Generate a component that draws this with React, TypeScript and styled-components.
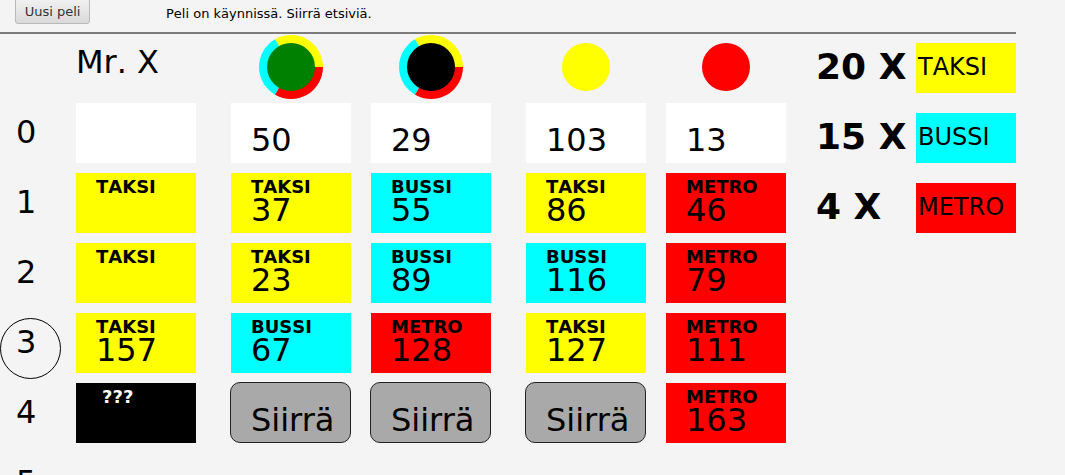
import React from "react";
import styled, { createGlobalStyle } from "styled-components";

const GlobalStyle = createGlobalStyle`
  *, *::before, *::after { box-sizing: border-box; }
  body {
    margin: 0;
    background: #f4f4f4;
    color: #000;
    font-family: "DejaVu Sans", sans-serif;
    font-kerning: none;
  }
`;

type Ticket = "TAKSI" | "BUSSI" | "METRO" | "???";

const ticketColors: Record<Ticket, string> = {
  TAKSI: "#ffff00",
  BUSSI: "#00ffff",
  METRO: "#ff0000",
  "???": "#000000",
};

const Page = styled.div`
  height: 100vh;
  overflow: hidden;
  padding-right: 49px;
`;

const Toolbar = styled.header`
  display: flex;
  align-items: flex-start;
  height: 34px;
  padding-left: 15px;
  border-bottom: 2px solid #7c7c7c;
`;

const NewGameButton = styled.button`
  width: 75px;
  height: 26px;
  margin: -2px 0 0;
  padding: 0;
  border: 1px solid #b9b9b9;
  border-radius: 3px;
  background: linear-gradient(#f2f2f2, #d9d9d9);
  color: #333;
  font: 13px/26px "DejaVu Sans", sans-serif;
`;

const Status = styled.p`
  margin: 0 0 0 76px;
  font-size: 13px;
  line-height: 27px;
`;

const Game = styled.main`
  display: flex;
  align-items: flex-start;
`;

const Board = styled.table`
  flex: 1;
  width: 100%;
  table-layout: fixed;
  border-collapse: collapse;
`;

const Column = styled.col<{ $width: number }>`
  width: ${(p) => p.$width}px;
`;

const HeadCell = styled.th<{ $gap: number }>`
  height: 69px;
  padding: 0 ${(p) => p.$gap}px 0 0;
  font-size: 32px;
  font-weight: 400;
  line-height: 56px;
  text-align: left;
  vertical-align: top;
`;

const Token = styled.svg`
  display: block;
  width: 64px;
  height: 64px;
  margin: 1px auto 0;
`;

const RoundCell = styled.th`
  position: relative;
  height: 70px;
  padding: 0 0 0 16px;
  font-size: 32px;
  font-weight: 400;
  line-height: 58px;
  text-align: left;
  vertical-align: top;
`;

const CurrentRing = styled.span`
  position: absolute;
  top: 5px;
  left: 0;
  width: 61px;
  height: 61px;
  border: 1px solid #000;
  border-radius: 50%;
`;

const MoveCell = styled.td<{ $gap: number }>`
  height: 70px;
  padding: 0 ${(p) => p.$gap}px 0 0;
  vertical-align: top;
`;

const MoveCard = styled.div<{ $ticket?: Ticket }>`
  display: flex;
  flex-direction: column;
  height: 60px;
  padding: 3px 0 10px 20px;
  background: ${(p) => (p.$ticket ? ticketColors[p.$ticket] : "#fff")};
`;

const TicketName = styled.span<{ $hidden: boolean }>`
  padding-left: ${(p) => (p.$hidden ? 6 : 0)}px;
  color: ${(p) => (p.$hidden ? "#fff" : "#000")};
  font-size: 18px;
  font-weight: 700;
  line-height: 21px;
`;

const Station = styled.span`
  margin-top: auto;
  font-size: 32px;
  line-height: 26px;
`;

const MoveButton = styled.button`
  display: flex;
  align-items: flex-end;
  width: calc(100% + 1px);
  height: 61px;
  margin: -1px 0 0 -1px;
  padding: 0 0 9px 20px;
  border: 1px solid #222;
  border-radius: 10px;
  background: #a9a9a9;
  color: #000;
  font: 32px/26px "DejaVu Sans", sans-serif;
`;

const Stock = styled.ul`
  display: flex;
  flex-direction: column;
  gap: 20px;
  width: 200px;
  margin: 9px 0 0 30px;
  padding: 0;
  list-style: none;
`;

const StockRow = styled.li`
  display: flex;
  justify-content: space-between;
  height: 50px;
`;

const StockCount = styled.span`
  font-size: 36px;
  font-weight: 700;
  line-height: 48px;
  white-space: nowrap;
`;

const StockTicket = styled.span<{ $ticket: Ticket }>`
  width: 100px;
  padding-left: 2px;
  background: ${(p) => ticketColors[p.$ticket]};
  font-size: 24px;
  line-height: 48px;
`;

interface Player {
  name: string;
  color: string;
  ring?: boolean;
}

const players: Player[] = [
  { name: "Vihreä", color: "#008000", ring: true },
  { name: "Musta", color: "#000000", ring: true },
  { name: "Keltainen", color: "#ffff00" },
  { name: "Punainen", color: "#ff0000" },
];

type Move = { ticket?: Ticket; station?: number } | "move" | null;

const rounds: Move[][] = [
  [{}, { station: 50 }, { station: 29 }, { station: 103 }, { station: 13 }],
  [
    { ticket: "TAKSI" },
    { ticket: "TAKSI", station: 37 },
    { ticket: "BUSSI", station: 55 },
    { ticket: "TAKSI", station: 86 },
    { ticket: "METRO", station: 46 },
  ],
  [
    { ticket: "TAKSI" },
    { ticket: "TAKSI", station: 23 },
    { ticket: "BUSSI", station: 89 },
    { ticket: "BUSSI", station: 116 },
    { ticket: "METRO", station: 79 },
  ],
  [
    { ticket: "TAKSI", station: 157 },
    { ticket: "BUSSI", station: 67 },
    { ticket: "METRO", station: 128 },
    { ticket: "TAKSI", station: 127 },
    { ticket: "METRO", station: 111 },
  ],
  [{ ticket: "???" }, "move", "move", "move", { ticket: "METRO", station: 163 }],
  [null, null, null, null, null],
];

const stock: { count: number; ticket: Ticket }[] = [
  { count: 20, ticket: "TAKSI" },
  { count: 15, ticket: "BUSSI" },
  { count: 4, ticket: "METRO" },
];

const revealRound = 3;
const columnWidths = [76, 155, 140, 155, 140, 120];
const columnGaps = [35, 20, 35, 20, 0];

function PlayerToken({ player }: { player: Player }) {
  return (
    <Token viewBox="0 0 64 64" role="img" aria-label={player.name}>
      {player.ring && (
        <>
          <path d="M32 32 L64 32 A32 32 0 0 0 16 4.29 Z" fill="#ffff00" />
          <path d="M32 32 L16 4.29 A32 32 0 0 0 16 59.71 Z" fill="#00ffff" />
          <path d="M32 32 L16 59.71 A32 32 0 0 0 64 32 Z" fill="#ff0000" />
        </>
      )}
      <circle cx="32" cy="32" r="24" fill={player.color} />
    </Token>
  );
}

function MoveContent({ move }: { move: Move }) {
  if (move === null) return null;
  if (move === "move") return <MoveButton type="button">Siirrä</MoveButton>;
  return (
    <MoveCard $ticket={move.ticket}>
      {move.ticket && (
        <TicketName $hidden={move.ticket === "???"}>{move.ticket}</TicketName>
      )}
      {move.station !== undefined && <Station>{move.station}</Station>}
    </MoveCard>
  );
}

export default function App() {
  return (
    <Page>
      <GlobalStyle />
      <Toolbar>
        <NewGameButton type="button">Uusi peli</NewGameButton>
        <Status>Peli on käynnissä. Siirrä etsiviä.</Status>
      </Toolbar>
      <Game>
        <Board>
          <colgroup>
            {columnWidths.map((width, i) => (
              <Column key={i} $width={width} />
            ))}
          </colgroup>
          <thead>
            <tr>
              <td />
              <HeadCell scope="col" $gap={columnGaps[0]}>
                Mr. X
              </HeadCell>
              {players.map((player, i) => (
                <HeadCell key={player.name} scope="col" $gap={columnGaps[i + 1]}>
                  <PlayerToken player={player} />
                </HeadCell>
              ))}
            </tr>
          </thead>
          <tbody>
            {rounds.map((moves, round) => (
              <tr key={round}>
                <RoundCell scope="row">
                  {round}
                  {round === revealRound && <CurrentRing />}
                </RoundCell>
                {moves.map((move, i) => (
                  <MoveCell key={i} $gap={columnGaps[i]}>
                    <MoveContent move={move} />
                  </MoveCell>
                ))}
              </tr>
            ))}
          </tbody>
        </Board>
        <Stock>
          {stock.map(({ count, ticket }) => (
            <StockRow key={ticket}>
              <StockCount>{count} X</StockCount>
              <StockTicket $ticket={ticket}>{ticket}</StockTicket>
            </StockRow>
          ))}
        </Stock>
      </Game>
    </Page>
  );
}
